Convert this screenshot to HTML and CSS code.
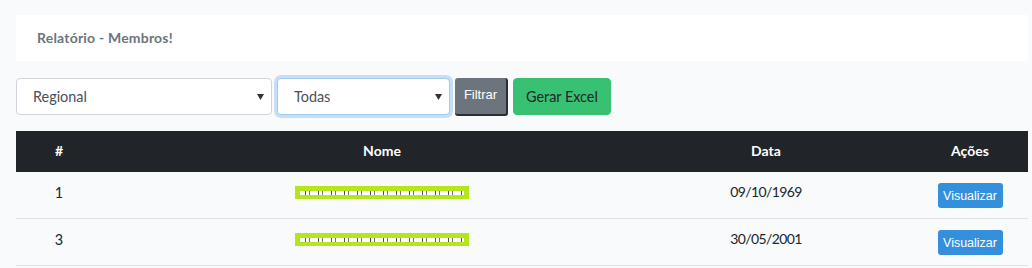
FILE: index.html
```html
<!DOCTYPE html>
<html lang="pt-BR">
<head>
  <meta charset="UTF-8" />
  <meta name="viewport" content="width=device-width, initial-scale=1.0"/>
  <title>Relatório - Membros</title>
  <link rel="stylesheet" href="styles.css">
</head>
<body>
  <div class="page">
    <div class="card">
      <h1 class="card-title">Relatório - Membros!</h1>
    </div>

    <form class="filters">
      <select class="form-control regional">
        <option>Regional</option>
      </select>
      <select class="form-control todas focused">
        <option>Todas</option>
      </select>
      <button type="button" class="btn-filtrar">Filtrar</button>
      <button type="button" class="btn btn-success">Gerar Excel</button>
    </form>

    <div class="table-wrap">
      <table class="table">
        <thead>
          <tr>
            <th class="col-id">#</th>
            <th class="col-nome">Nome</th>
            <th class="col-data">Data</th>
            <th class="col-acoes">Ações</th>
          </tr>
        </thead>
        <tbody>
          <tr>
            <td>1</td>
            <td><span class="redact"><span class="redact-line"></span></span></td>
            <td class="date">09/10/1969</td>
            <td><button type="button" class="btn-sm">Visualizar</button></td>
          </tr>
          <tr>
            <td>3</td>
            <td><span class="redact"><span class="redact-line"></span></span></td>
            <td class="date">30/05/2001</td>
            <td><button type="button" class="btn-sm">Visualizar</button></td>
          </tr>
        </tbody>
      </table>
    </div>
  </div>
</body>
</html>
```

FILE: styles.css
```css
* {
  box-sizing: border-box;
  margin: 0;
  padding: 0;
}

body {
  font-family: 'Lato', 'Open Sans', sans-serif;
  font-size: 14.4px;
  line-height: 1.6;
  color: #212529;
  background: #f8fafc;
  overflow: hidden;
}

.page {
  padding: 15px 4px 0 16px;
}

.card {
  background: #fff;
  height: 46px;
  padding: 0 21px;
  display: flex;
  align-items: center;
}

.card-title {
  font-size: 14px;
  font-weight: 700;
  color: #6c757d;
  letter-spacing: 0.2px;
}

.filters {
  display: flex;
  align-items: flex-start;
  gap: 5px;
  margin-top: 17px;
}

.form-control {
  appearance: none;
  -webkit-appearance: none;
  height: 37px;
  padding: 0 12px 0 16px;
  font-family: inherit;
  font-size: 14.4px;
  color: #495057;
  background-color: #fff;
  background-image: url("data:image/svg+xml;utf8,<svg xmlns='http://www.w3.org/2000/svg' width='7' height='7'><path d='M0 1h7L3.5 7z' fill='%23333'/></svg>");
  background-repeat: no-repeat;
  background-position: right 7px center;
  border: 1px solid #ced4da;
  border-radius: 4px;
  outline: none;
}

.regional {
  width: 256px;
}

.todas {
  width: 173px;
}

.focused {
  border-color: #a1cbef;
  box-shadow: 0 0 0 3px rgba(52, 144, 220, 0.25);
}

.btn-filtrar {
  width: 53px;
  height: 38px;
  font-family: 'Liberation Sans', sans-serif;
  font-size: 13px;
  color: #fff;
  background: #6c757d;
  border: none;
  border-right: 2px solid #2a2e33;
  border-bottom: 2px solid #2a2e33;
  border-radius: 3px;
  padding-bottom: 3px;
}

.btn {
  height: 37px;
  padding: 0 12px;
  font-family: inherit;
  font-size: 14.4px;
  color: #212529;
  border: 1px solid transparent;
  border-radius: 4px;
}

.btn-success {
  background: #38c172;
  border-color: #38c172;
}

.table-wrap {
  margin-top: 15px;
  overflow: hidden;
}

.table {
  width: 1054px;
  border-collapse: collapse;
  text-align: center;
}

.table th {
  height: 41px;
  padding: 0 12px;
  color: #fff;
  background: #212529;
  font-weight: 700;
  font-size: 14px;
}

.col-id { width: 86px; }
.col-nome { width: 560px; }
.col-data { width: 208px; }

.table td {
  height: 45px;
  padding: 9px 12px 10px;
  vertical-align: top;
  border-bottom: 1px solid #dee2e6;
}

.table td.date {
  font-size: 14px;
  letter-spacing: -0.6px;
}

.redact {
  display: inline-block;
  width: 174px;
  height: 13px;
  margin-top: 5px;
  padding: 5px 5px 0;
  background: #b5e61d;
  vertical-align: top;
}

.redact-line {
  display: block;
  height: 4px;
  background: repeating-linear-gradient(90deg, #fff 0 5px, #5a4a6a 5px 6px, #fff 6px 9px, #8a6a8a 9px 10px, #fff 10px 13px);
}

.btn-sm {
  width: 65px;
  height: 25px;
  margin-top: 2px;
  font-family: 'Liberation Sans', sans-serif;
  font-size: 12.5px;
  color: #fff;
  background: #3490dc;
  border: none;
  border-radius: 3px;
}
```
